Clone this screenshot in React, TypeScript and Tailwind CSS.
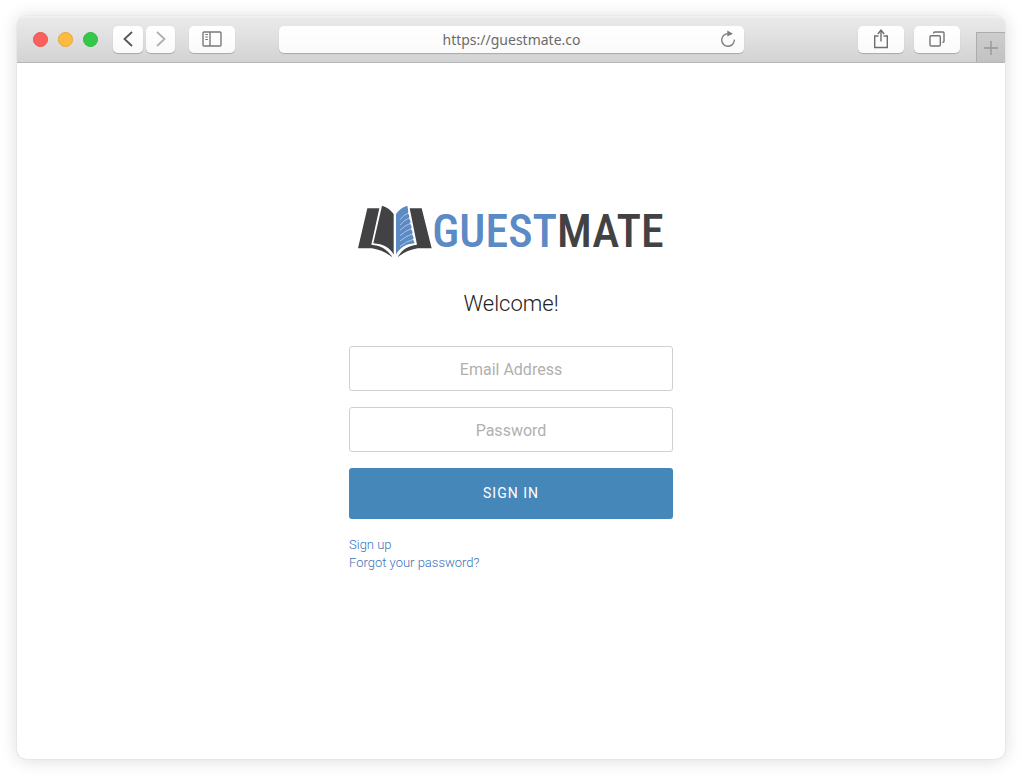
import React from "react";

function BookLogo() {
  return (
    <svg viewBox="9 15 222 159" className="h-[53px] w-[74px] shrink-0" aria-hidden="true">
      <g fill="#424244">
        <path d="M37 25H73L49 134C77 136 99 149 112 172C94 158 75 149 51 145H9Z" />
        <path d="M81 17Q102 23 116 42V164C104 143 85 132 55 130Z" />
        <path d="M164 25H200L230 145H188C164 149 145 158 128 172C140 149 159 137 186 134Z" />
      </g>
      <path fill="#5b8ac5" d="M123 42Q136 23 157 17L160 34L159 39L163 49L162 54L167 65L165 70L170 81L168 86L173 97L171 102L176 113L174 118L179 130C152 132 135 143 123 164Z" />
      <g fill="none" stroke="#fff" strokeOpacity="0.75" strokeWidth="2">
        <path d="M135 59Q146 44 160 39" />
        <path d="M135 75Q149 59 163 54" />
        <path d="M135 91Q151 75 166 70" />
        <path d="M135 107Q153 91 169 86" />
        <path d="M135 123Q155 107 172 102" />
        <path d="M135 139Q156 123 175 118" />
      </g>
    </svg>
  );
}

const toolButton =
  "flex h-[27px] items-center justify-center rounded-[5px] bg-linear-to-b from-white to-[#fafafa] text-[#6b6b6b] shadow-[0_1px_1px_rgba(0,0,0,0.22)]";

function Toolbar() {
  return (
    <header className="flex h-[47px] items-center border-b border-[#b5b5b5] bg-linear-to-b from-[#ebebeb] to-[#d3d3d3] pl-4 shadow-[inset_0_2px_0_#f1f1f1]">
      <div className="flex gap-[10px]">
        <span className="size-[15px] rounded-full border border-[#e9524d] bg-[#fc605c]" />
        <span className="size-[15px] rounded-full border border-[#e5a536] bg-[#fdbc40]" />
        <span className="size-[15px] rounded-full border border-[#2dbb41] bg-[#34c84a]" />
      </div>
      <nav className="ml-[15px] flex gap-[3px]">
        <button type="button" aria-label="Back" className={`${toolButton} w-[30px]`}>
          <svg viewBox="0 0 10 16" className="h-4 w-[10px]" fill="none" stroke="#555" strokeWidth="1.8">
            <path d="M9 1L1.5 8L9 15" />
          </svg>
        </button>
        <button type="button" aria-label="Forward" className={`${toolButton} w-[29px]`}>
          <svg viewBox="0 0 10 16" className="h-4 w-[10px]" fill="none" stroke="#b0b0b0" strokeWidth="1.8">
            <path d="M1 1L8.5 8L1 15" />
          </svg>
        </button>
      </nav>
      <button type="button" aria-label="Show sidebar" className={`${toolButton} ml-[14px] w-[46px]`}>
        <svg viewBox="0 0 20 16" className="h-4 w-5" fill="none" stroke="#7a7a7a" strokeWidth="1.4">
          <rect x="1" y="1" width="18" height="14" rx="1" />
          <path d="M8 1V15" />
          <path d="M3.2 3.5H6M3.2 6H6M3.2 8.5H6" strokeWidth="1" />
        </svg>
      </button>
      <div className="relative ml-11 mr-[114px] flex min-w-0 flex-1">
        <input
          aria-label="Address"
          defaultValue="https://guestmate.co"
          className="h-[27px] w-full rounded-[5px] bg-linear-to-b from-white to-[#fafafa] px-8 text-center font-['Noto_Sans',sans-serif] text-sm text-[#6b6b6b] shadow-[0_1px_1px_rgba(0,0,0,0.22)] outline-none"
        />
        <button type="button" aria-label="Reload" className="absolute right-2 top-1">
          <svg viewBox="0 0 16 18" className="h-[18px] w-4" fill="none" stroke="#7d7d7d" strokeWidth="1.4">
            <path d="M8 3.6A6.3 6.3 0 1 0 14.3 9.6" />
            <path d="M7.3 0.4V6.6L13 3.8Z" fill="#7d7d7d" stroke="none" />
          </svg>
        </button>
      </div>
      <div className="flex gap-[10px]">
        <button type="button" aria-label="Share" className={`${toolButton} w-[46px]`}>
          <svg viewBox="0 0 16 20" className="h-5 w-4" fill="none" stroke="#6d6d6d" strokeWidth="1.4">
            <path d="M5.5 7H1.7V18.5H14.3V7H10.5" />
            <path d="M8 12.5V2" />
            <path d="M4.8 5L8 1.2L11.2 5" />
          </svg>
        </button>
        <button type="button" aria-label="Show all tabs" className={`${toolButton} w-[46px]`}>
          <svg viewBox="0 0 16 16" className="size-4" fill="none" stroke="#747474" strokeWidth="1.4">
            <rect x="1" y="4.7" width="10.3" height="10.3" rx="1.2" />
            <path d="M4.7 2.6V2Q4.7 1 5.7 1H14Q15 1 15 2V10.3Q15 11.3 14 11.3H13.4" />
          </svg>
        </button>
      </div>
      <button
        type="button"
        aria-label="New tab"
        className="ml-4 flex h-[30px] w-[29px] items-center justify-center self-end border-l border-t border-[#acacac] bg-linear-to-b from-[#cdcdcd] to-[#c2c2c2]"
      >
        <svg viewBox="0 0 14 14" className="size-[14px]" stroke="#979797" strokeWidth="1.4">
          <path d="M7 0V14M0 7H14" />
        </svg>
      </button>
    </header>
  );
}

const field =
  "h-[45px] w-full rounded-[3px] border border-[#d0d0d0] bg-white pt-0.5 text-center text-base text-[#333] outline-none placeholder:text-[#b0b0b0]";

export default function App() {
  return (
    <div className="flex min-h-screen flex-col bg-white pt-4 pr-[19px] pb-[18px] pl-[17px] font-[Roboto,sans-serif]">
      <div className="flex flex-1 flex-col overflow-hidden rounded-[9px] bg-white shadow-[0_1px_18px_rgba(0,0,0,0.15),0_0_1px_rgba(0,0,0,0.25)]">
        <Toolbar />
        <main className="mx-auto w-full max-w-[324px] flex-1 pt-[142px] pb-10">
          <div className="flex h-[53px] items-center justify-center">
            <BookLogo />
            <span className="font-['Roboto_Condensed',sans-serif] text-[46px] leading-[53px] font-medium text-[#424244]">
              <span className="text-[#5b8ac5]">GUEST</span>MATE
            </span>
          </div>
          <h1 className="mt-8 text-center text-[22px] leading-7 font-light text-[#222]">Welcome!</h1>
          <form className="mt-7 flex flex-col gap-4" onSubmit={(e) => e.preventDefault()}>
            <input type="email" aria-label="Email Address" placeholder="Email Address" className={field} />
            <input type="password" aria-label="Password" placeholder="Password" className={field} />
            <button
              type="submit"
              className="h-[51px] w-full rounded-[3px] bg-[#4687b9] pb-0.5 text-sm tracking-[1px] text-white"
            >
              SIGN IN
            </button>
          </form>
          <nav className="mt-[17px] flex flex-col items-start text-[13px] leading-[18px] font-light text-[#3a72bb]">
            <a href="#signup">Sign up</a>
            <a href="#forgot">Forgot your password?</a>
          </nav>
        </main>
      </div>
    </div>
  );
}
